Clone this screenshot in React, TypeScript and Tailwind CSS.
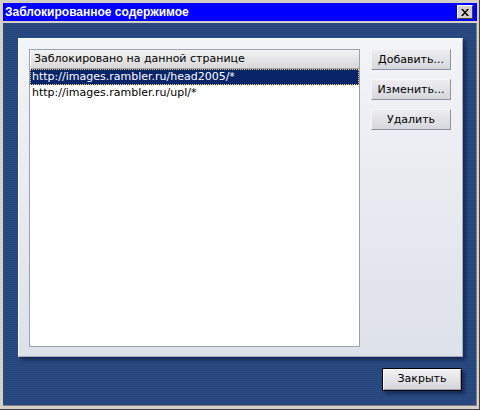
const font = { fontFamily: '"DejaVu Sans", Tahoma, sans-serif' }

const rows = ['http://images.rambler.ru/head2005/*', 'http://images.rambler.ru/upl/*']

function SideButton({ label }: { label: string }) {
  return (
    <button className="w-[80px] h-[21px] text-[11px] text-black border border-t-[#f4f4f6] border-l-[#f4f4f6] border-b-[#8c93a0] border-r-[#8c93a0] bg-gradient-to-b from-[#eeeef1] to-[#d6d7dc] flex items-center justify-center leading-none">
      {label}
    </button>
  )
}

export default function App() {
  return (
    <div
      style={font}
      className="w-[480px] h-[410px] bg-[#d4d0c8] flex flex-col pl-[3px] pt-[3px] pr-[2px] pb-[3px] border-r border-b border-[#404040] overflow-hidden"
    >
      {/* заголовок */}
      <div className="h-[18px] bg-[#0000ff] flex items-center justify-between pl-[2px] pr-[4px]">
        <span className="text-white font-bold text-[12px] font-['Liberation_Sans',sans-serif]">
          Заблокированное содержимое
        </span>
        <button className="w-[16px] h-[14px] bg-[#d4d0c8] border border-t-white border-l-white border-b-[#404040] border-r-[#404040] flex items-center justify-center">
          <svg width="8" height="7" viewBox="0 0 8 7">
            <path d="M0 0h2l2 2.5L6 0h2L5 3.5 8 7H6L4 4.5 2 7H0l3-3.5z" fill="#000" />
          </svg>
        </button>
      </div>
      <div className="h-[2px]" />

      {/* тело окна */}
      <div className="flex-1 flex flex-col border-r border-b border-[#808080] pl-[15px] pr-[13px] pt-[15px] bg-[repeating-linear-gradient(180deg,#2b4b83_0px,#2b4b83_1px,#25457c_1px,#25457c_2px)]">
        <div className="h-[319px] flex gap-[11px] pl-[10px] pr-[11px] pt-[10px] pb-[9px] bg-gradient-to-b from-[#f3f4f7] to-[#dde1e9] border-t border-l border-white border-b border-r border-b-[#a4acbb] border-r-[#a4acbb] shadow-[3px_3px_3px_rgba(10,20,50,0.55)]">
          <div className="w-[332px] flex flex-col bg-white border border-[#9aa2b1]">
            <div className="h-[19px] flex items-center pl-[3px] text-[11px] text-black bg-gradient-to-b from-[#f2f2f2] to-[#d9d9dc] border-b border-[#a6a6a6] border-l border-l-white">
              Заблокировано на данной странице
            </div>
            {rows.map((r, i) => (
              <div
                key={r}
                className={`h-[16px] flex items-center pl-[2px] text-[11px] ${
                  i === 0 ? 'bg-[#0a246a] text-white outline outline-1 outline-dotted outline-[#f0d070] -outline-offset-1' : 'text-black'
                }`}
              >
                {r}
              </div>
            ))}
          </div>
          <div className="flex flex-col gap-[9px]">
            <SideButton label="Добавить..." />
            <SideButton label="Изменить..." />
            <SideButton label="Удалить" />
          </div>
        </div>
        <div className="flex justify-end pt-[11px] pr-[1px]">
          <button className="w-[80px] h-[23px] text-[11px] text-black border border-black bg-gradient-to-b from-[#f2f2f4] to-[#d4d5da] shadow-[inset_1px_1px_0_#ffffff,inset_-1px_-1px_0_#9aa0aa,3px_3px_3px_rgba(10,20,50,0.5)] flex items-center justify-center">
            Закрыть
          </button>
        </div>
      </div>
    </div>
  )
}
